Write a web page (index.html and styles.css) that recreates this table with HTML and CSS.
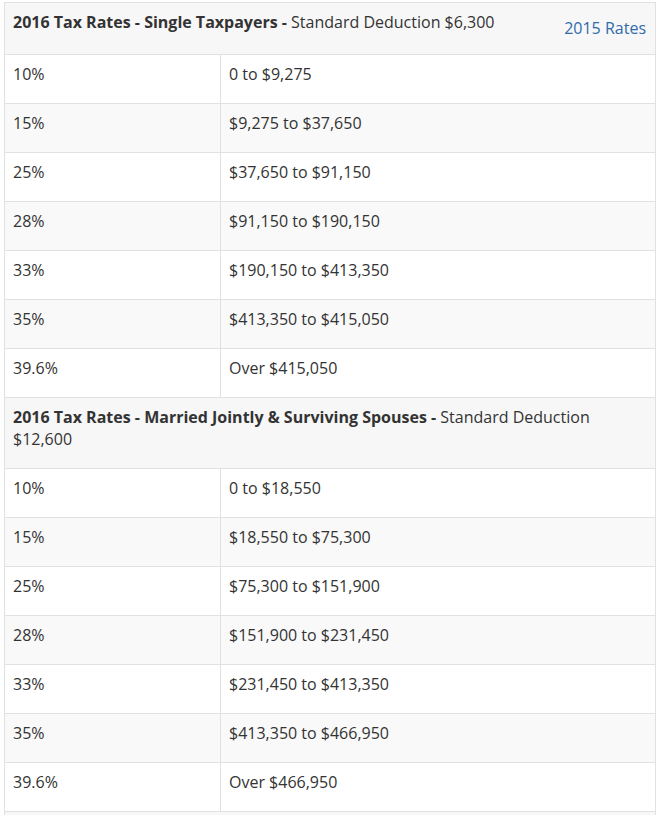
FILE: index.html
```html
<!DOCTYPE html>
<html>
<head>
<meta charset="utf-8">
<link rel="stylesheet" href="styles.css">
</head>
<body>
<table class="rates">
  <colgroup><col class="col-rate"><col class="col-range"></colgroup>
  <tr class="head">
    <th colspan="2" class="head-cell head-cell--single">
      <div class="head-inner">
        <span><b>2016 Tax Rates - Single Taxpayers -</b> Standard Deduction $6,300</span>
        <a class="prev-link" href="#">2015 Rates</a>
      </div>
    </th>
  </tr>
  <tr><td>10%</td><td>0 to $9,275</td></tr>
  <tr class="alt"><td>15%</td><td>$9,275 to $37,650</td></tr>
  <tr><td>25%</td><td>$37,650 to $91,150</td></tr>
  <tr class="alt"><td>28%</td><td>$91,150 to $190,150</td></tr>
  <tr><td>33%</td><td>$190,150 to $413,350</td></tr>
  <tr class="alt"><td>35%</td><td>$413,350 to $415,050</td></tr>
  <tr><td>39.6%</td><td>Over $415,050</td></tr>
  <tr class="head">
    <th colspan="2" class="head-cell">
      <b>2016 Tax Rates - Married Jointly &amp; Surviving Spouses -</b> Standard Deduction $12,600
    </th>
  </tr>
  <tr><td>10%</td><td>0 to $18,550</td></tr>
  <tr class="alt"><td>15%</td><td>$18,550 to $75,300</td></tr>
  <tr><td>25%</td><td>$75,300 to $151,900</td></tr>
  <tr class="alt"><td>28%</td><td>$151,900 to $231,450</td></tr>
  <tr><td>33%</td><td>$231,450 to $413,350</td></tr>
  <tr class="alt"><td>35%</td><td>$413,350 to $466,950</td></tr>
  <tr><td>39.6%</td><td>Over $466,950</td></tr>
  <tr class="head">
    <th colspan="2" class="head-cell head-cell--empty"></th>
  </tr>
</table>
</body>
</html>
```
FILE: styles.css
```css
html, body {
  margin: 0;
  padding: 0;
  background: #fff;
}
body {
  font-family: "Open Sans", "Liberation Sans", sans-serif;
  font-size: 16px;
  line-height: 22px;
  color: #333;
}
.rates {
  border-collapse: collapse;
  table-layout: fixed;
  width: 652px;
  margin: 2px 0 0 4px;
}
.col-rate { width: 216px; }
.rates td,
.rates th {
  border: 1px solid #e1e1e1;
  text-align: left;
  vertical-align: top;
  font-weight: normal;
}
.rates td {
  padding: 8px 8px 18px 8px;
}
.rates tr.alt td {
  background: #f9f9f9;
}
.head-cell {
  background: #f7f7f7;
  padding: 8px 8px 18px 8px;
}
.head-cell b {
  font-weight: 700;
}
.head-cell--single {
  padding: 8px 9px 15px 8px;
}
.head-cell--empty {
  height: 48px;
}
.head-inner {
  display: flex;
  justify-content: space-between;
  align-items: flex-start;
}
.prev-link {
  margin-top: 6px;
  color: #2f6bab;
  text-decoration: none;
  white-space: nowrap;
}
```
